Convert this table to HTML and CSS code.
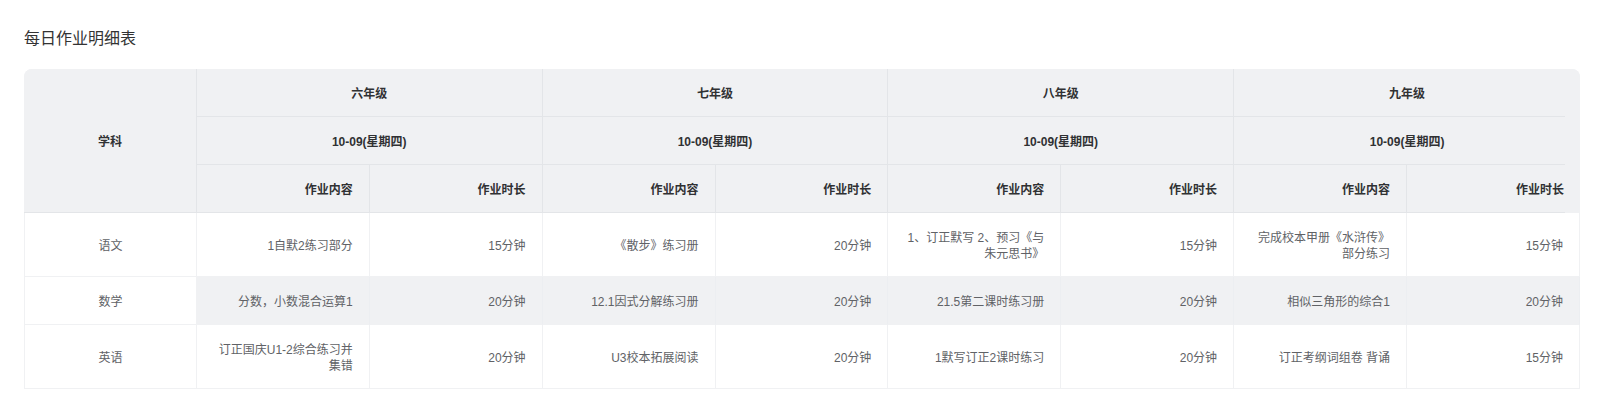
FILE: index.html
```html
<!DOCTYPE html>
<html lang="zh-CN">
<head>
<meta charset="utf-8">
<title>每日作业明细表</title>
<link rel="stylesheet" href="styles.css">
</head>
<body>
<div class="page">
  <h1 class="title">每日作业明细表</h1>
  <div class="card">
    <table class="grid">
      <colgroup>
        <col><col><col><col><col><col><col><col><col>
      </colgroup>
      <thead>
        <tr>
          <th class="subject-head" rowspan="3">学科</th>
          <th class="center sep" colspan="2">六年级</th>
          <th class="center sep" colspan="2">七年级</th>
          <th class="center sep" colspan="2">八年级</th>
          <th class="center gut" colspan="2">九年级</th>
        </tr>
        <tr>
          <th class="center sep" colspan="2">10-09(星期四)</th>
          <th class="center sep" colspan="2">10-09(星期四)</th>
          <th class="center sep" colspan="2">10-09(星期四)</th>
          <th class="center gut" colspan="2">10-09(星期四)</th>
        </tr>
        <tr>
          <th class="sep">作业内容</th><th class="sep">作业时长</th>
          <th class="sep">作业内容</th><th class="sep">作业时长</th>
          <th class="sep">作业内容</th><th class="sep">作业时长</th>
          <th class="sep">作业内容</th><th class="gut">作业时长</th>
        </tr>
      </thead>
      <tbody>
        <tr>
          <td class="subject">语文</td>
          <td>1自默2练习部分</td><td>15分钟</td>
          <td>《散步》练习册</td><td>20分钟</td>
          <td>1、订正默写 2、预习《与朱元思书》</td><td>15分钟</td>
          <td>完成校本甲册《水浒传》部分练习</td><td>15分钟</td>
        </tr>
        <tr class="stripe">
          <td class="subject">数学</td>
          <td>分数，小数混合运算1</td><td>20分钟</td>
          <td>12.1因式分解练习册</td><td>20分钟</td>
          <td>21.5第二课时练习册</td><td>20分钟</td>
          <td>相似三角形的综合1</td><td>20分钟</td>
        </tr>
        <tr>
          <td class="subject">英语</td>
          <td>订正国庆U1-2综合练习并集错</td><td>20分钟</td>
          <td>U3校本拓展阅读</td><td>20分钟</td>
          <td>1默写订正2课时练习</td><td>20分钟</td>
          <td>订正考纲词组卷 背诵</td><td>15分钟</td>
        </tr>
      </tbody>
    </table>
  </div>
</div>
</body>
</html>
```

FILE: styles.css
```css
* {
  box-sizing: border-box;
}

html, body {
  margin: 0;
  padding: 0;
  background: #ffffff;
}

body {
  font-family: "Liberation Sans", "Noto Sans CJK SC", sans-serif;
}

.page {
  padding: 28px 25px 0 24px;
}

.title {
  margin: 0 0 19px 0;
  font-size: 16px;
  line-height: 22px;
  font-weight: normal;
  color: #333333;
}

.card {
  width: 1556px;
  border-radius: 8px 8px 0 0;
  overflow: hidden;
  background: #f0f1f3;
}

.grid {
  width: 100%;
  table-layout: fixed;
  border-collapse: separate;
  border-spacing: 0;
  font-size: 12px;
}

.grid col {
  width: 11.111%;
}

.grid th,
.grid td {
  padding: 17px 16px 14px 16px;
  line-height: 16px;
  text-align: right;
  vertical-align: middle;
  word-break: break-all;
}

.grid th {
  background: #f0f1f3;
  color: #303133;
  font-weight: bold;
  border-bottom: 1px solid #e3e5e8;
}

.grid th.center,
.grid th.subject-head {
  text-align: center;
}

.grid th.sep,
.grid th.subject-head {
  border-right: 1px solid #e3e5e8;
}

.grid th.gut {
  border-bottom: 0;
  padding-bottom: 15px;
  background-color: #f0f1f3;
  background-image: linear-gradient(#e3e5e8, #e3e5e8);
  background-repeat: no-repeat;
  background-position: left bottom;
  background-size: calc(100% - 15px) 1px;
}

.grid td {
  background: #ffffff;
  color: #606266;
  border-right: 1px solid #f0f1f3;
  border-bottom: 1px solid #f0f1f3;
}

.grid td.subject {
  text-align: center;
  border-left: 1px solid #f0f1f3;
  background: #ffffff;
}

.grid tr.stripe td {
  background: #f0f1f3;
  border-right-color: #eceef1;
}

.grid tr.stripe td.subject {
  background: #ffffff;
  border-right-color: #f0f1f3;
}
```
